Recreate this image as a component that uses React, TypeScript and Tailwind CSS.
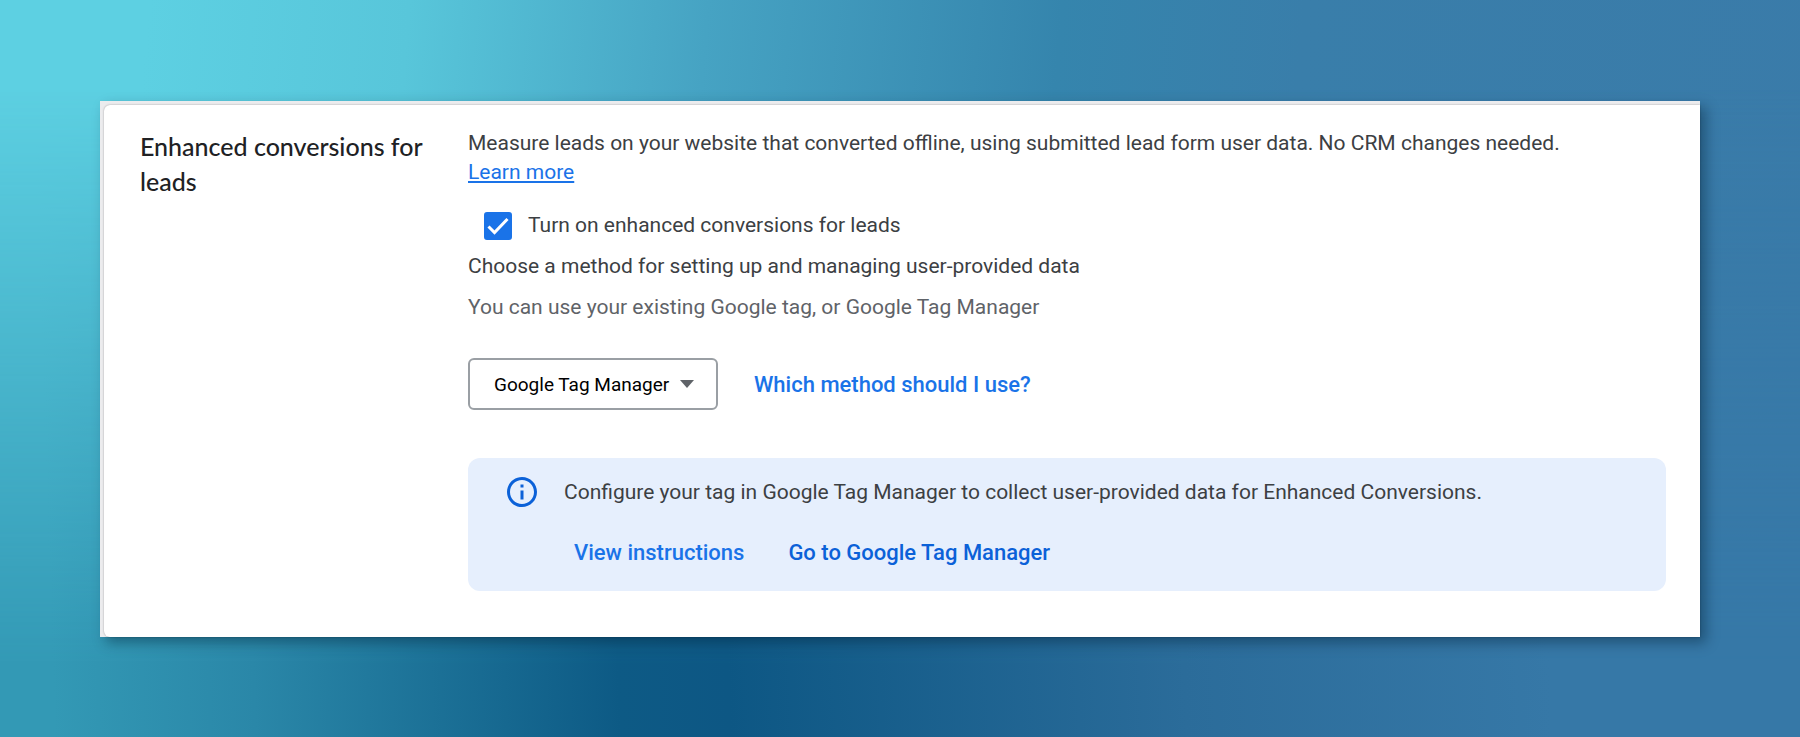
import { useState } from "react";

const METHODS = ["Google Tag Manager", "Google tag"];

function InfoIcon() {
  return (
    <svg className="size-9 shrink-0 text-[#0b61d8]" viewBox="0 0 24 24" fill="currentColor" aria-hidden="true">
      <path d="M11 7h2v2h-2zm0 4h2v6h-2zm1-9C6.48 2 2 6.48 2 12s4.48 10 10 10 10-4.48 10-10S17.52 2 12 2zm0 18c-4.41 0-8-3.59-8-8s3.59-8 8-8 8 3.59 8 8-3.59 8-8 8z" />
    </svg>
  );
}

function EnableCheckbox() {
  const [enabled, setEnabled] = useState(true);

  return (
    <label className="mt-6 ml-4 flex items-center gap-4 self-start">
      <span className="grid size-7">
        <input
          type="checkbox"
          checked={enabled}
          onChange={(e) => setEnabled(e.target.checked)}
          className="peer col-start-1 row-start-1 size-7 appearance-none rounded-[3px] border-2 border-[#5f6368]
            checked:border-[#1a73e8] checked:bg-[#1a73e8]"
        />
        <svg
          className="pointer-events-none col-start-1 row-start-1 size-7 text-white opacity-0 peer-checked:opacity-100"
          viewBox="0 0 28 28" fill="none" stroke="currentColor" aria-hidden="true"
        >
          <path strokeWidth={3} d="M4.5 14.5l6 6L23.5 7" />
        </svg>
      </span>
      Turn on enhanced conversions for leads
    </label>
  );
}

function MethodSelect() {
  const [method, setMethod] = useState(METHODS[0]);

  return (
    <div className="grid items-center">
      <select
        aria-label="Setup method"
        value={method}
        onChange={(e) => setMethod(e.target.value)}
        className="col-start-1 row-start-1 h-[52px] w-[250px] appearance-none rounded-md border-2 border-[#9a9fa4]
          bg-white pl-6 text-[19px] text-black"
      >
        {METHODS.map((m) => (
          <option key={m}>{m}</option>
        ))}
      </select>
      <svg
        className="pointer-events-none col-start-1 row-start-1 mr-6 h-2 w-[14px] justify-self-end text-[#5f6368]"
        viewBox="0 0 14 8" fill="currentColor" aria-hidden="true"
      >
        <path d="M0 0h14L7 8z" />
      </svg>
    </div>
  );
}

export default function App() {
  return (
    <main
      className="relative isolate min-h-screen px-[100px] py-[101px] font-['Roboto',sans-serif]
        bg-[linear-gradient(95deg,#5dd0e2_0%,#5dd0e2_8%,#58c6da_22%,#46a3c3_38%,#3585ad_57%,#397eaa_70%,#3a7ba9_100%)]"
    >
      {/* darker tones rising from the bottom edge */}
      <div
        className="absolute inset-0 -z-10
          bg-[linear-gradient(88deg,#3399b5_3%,#2a87a8_14%,#0d5a85_34%,#0d5784_40%,#2b6c9a_65%,#3678a7_85%)]
          [mask-image:linear-gradient(to_bottom,transparent_12%,black_90%)]"
      />

      <section className="bg-[#ececee] pt-1 pl-1 shadow-[6px_6px_12px_rgba(0,30,50,0.4)]">
        <div className="flex gap-6 rounded-l-md bg-white pt-6 pr-[34px] pb-[46px] pl-9 shadow-[0_0_2px_rgba(0,0,0,0.35)]">
          <h2 className="w-[304px] shrink-0 font-['Lato',sans-serif] text-[25px] leading-[35px] font-medium text-[#202124]">
            Enhanced conversions for leads
          </h2>

          <div className="flex flex-1 flex-col text-[21px] leading-[29px] text-[#3c4043]">
            <p>
              Measure leads on your website that converted offline, using submitted lead form user data. No CRM
              changes needed.
              <br />
              <a href="#learn-more" className="text-[#1a73e8] underline">Learn more</a>
            </p>

            <EnableCheckbox />

            <p className="mt-3">Choose a method for setting up and managing user-provided data</p>
            <p className="mt-3 text-[#5f6368]">You can use your existing Google tag, or Google Tag Manager</p>

            <div className="mt-9 flex items-center gap-9">
              <MethodSelect />
              <a href="#methods" className="text-[22px] font-medium text-[#1a73e8]">Which method should I use?</a>
            </div>

            <div className="mt-12 flex gap-6 rounded-xl bg-[#e6effd] pt-4 pb-6 pl-9">
              <InfoIcon />
              <div>
                <p className="leading-9">
                  Configure your tag in Google Tag Manager to collect user-provided data for Enhanced Conversions.
                </p>
                <div className="mt-7 ml-2.5 flex gap-11 text-[22px] font-medium">
                  <a href="#instructions" className="text-[#1a73e8]">View instructions</a>
                  <a href="#tag-manager" className="text-[#0b61d8]">Go to Google Tag Manager</a>
                </div>
              </div>
            </div>
          </div>
        </div>
      </section>
    </main>
  );
}
